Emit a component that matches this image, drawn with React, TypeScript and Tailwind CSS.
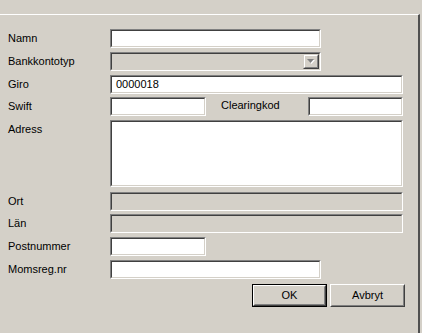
import React from "react";

const font = { fontFamily: '"Liberation Sans", Arial, sans-serif' };

function Sunken({
  className,
  bg,
  children,
}: {
  className: string;
  bg: string;
  children?: React.ReactNode;
}) {
  return (
    <div className={`${className} border border-t-[#808080] border-l-[#808080] border-b-white border-r-white`}>
      <div className={`h-full w-full border border-t-[#404040] border-l-[#404040] border-b-[#d4d0c8] border-r-[#d4d0c8] ${bg} flex`}>
        {children}
      </div>
    </div>
  );
}

function Label({ children, className = "" }: { children: React.ReactNode; className?: string }) {
  return (
    <div className={`w-[102px] h-[19px] flex items-center leading-none text-[11px] text-black ${className}`}>
      {children}
    </div>
  );
}

export default function App() {
  return (
    <div className="w-[422px] h-[333px] bg-[#d4d0c8] overflow-hidden pt-[14px]" style={font}>
      <div className="w-[420px] h-[330px] border-t border-t-white border-r-2 border-r-[#505050] pl-[8px] pt-[14px] flex flex-col text-[11px] text-black">
        {/* Namn */}
        <div className="flex">
          <Label>Namn</Label>
          <Sunken className="w-[211px] h-[19px]" bg="bg-white" />
        </div>
        {/* Bankkontotyp */}
        <div className="flex mt-[4px]">
          <Label>Bankkontotyp</Label>
          <Sunken className="w-[211px] h-[19px]" bg="bg-[#d4d0c8] justify-end">
            <div className="w-[16px] h-full border border-t-[#d4d0c8] border-l-[#d4d0c8] border-b-[#404040] border-r-[#404040]">
              <div className="w-full h-full border border-t-white border-l-white border-b-[#808080] border-r-[#808080] flex items-center justify-center">
                <svg width="8" height="5" viewBox="0 0 8 5">
                  <polygon points="1,1 8,1 4.5,5" fill="#ffffff" />
                  <polygon points="0,0 7,0 3.5,4" fill="#808080" />
                </svg>
              </div>
            </div>
          </Sunken>
        </div>
        {/* Giro */}
        <div className="flex mt-[4px]">
          <Label>Giro</Label>
          <Sunken className="w-[293px] h-[19px]" bg="bg-white items-center">
            <span className="pl-[4px] text-[11px] leading-none">0000018</span>
          </Sunken>
        </div>
        {/* Swift / Clearingkod */}
        <div className="flex mt-[3px]">
          <Label>Swift</Label>
          <Sunken className="w-[96px] h-[19px]" bg="bg-white" />
          <div className="w-[102px] pl-[15px] h-[16px] flex items-center leading-none">Clearingkod</div>
          <Sunken className="w-[95px] h-[19px]" bg="bg-white" />
        </div>
        {/* Adress */}
        <div className="flex mt-[4px]">
          <Label>Adress</Label>
          <Sunken className="w-[293px] h-[67px]" bg="bg-white" />
        </div>
        {/* Ort */}
        <div className="flex mt-[5px]">
          <Label>Ort</Label>
          <Sunken className="w-[293px] h-[19px]" bg="bg-[#d4d0c8]" />
        </div>
        {/* Län */}
        <div className="flex mt-[3px]">
          <Label>Län</Label>
          <Sunken className="w-[293px] h-[19px]" bg="bg-[#d4d0c8]" />
        </div>
        {/* Postnummer */}
        <div className="flex mt-[4px]">
          <Label>Postnummer</Label>
          <Sunken className="w-[96px] h-[19px]" bg="bg-white" />
        </div>
        {/* Momsreg.nr */}
        <div className="flex mt-[4px]">
          <Label>Momsreg.nr</Label>
          <Sunken className="w-[211px] h-[19px]" bg="bg-white" />
        </div>
        {/* Buttons */}
        <div className="flex mt-[5px] ml-[244px] gap-[3px]">
          <div className="w-[75px] h-[23px] border border-black">
            <div className="w-full h-full border border-t-white border-l-white border-b-[#404040] border-r-[#404040]">
              <div className="w-full h-full border border-t-[#d4d0c8] border-l-[#d4d0c8] border-b-[#808080] border-r-[#808080] flex items-center justify-center leading-none">
                OK
              </div>
            </div>
          </div>
          <div className="w-[75px] h-[23px] border border-t-white border-l-white border-b-[#404040] border-r-[#404040]">
            <div className="w-full h-full border border-t-[#d4d0c8] border-l-[#d4d0c8] border-b-[#808080] border-r-[#808080] flex items-center justify-center leading-none">
              Avbryt
            </div>
          </div>
        </div>
      </div>
    </div>
  );
}
